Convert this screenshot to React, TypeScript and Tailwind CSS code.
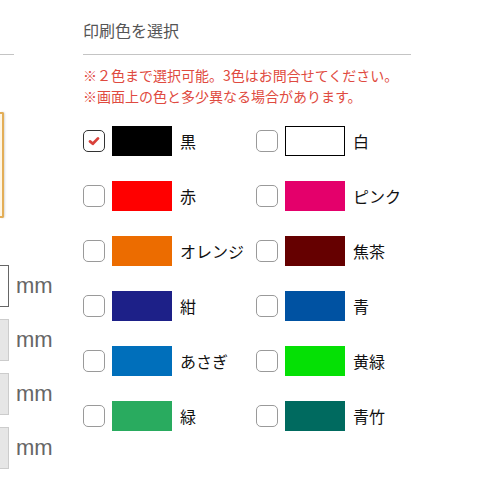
const colors = [
  { name: "黒", hex: "#000000", checked: true },
  { name: "白", hex: "#ffffff", border: true },
  { name: "赤", hex: "#ff0000" },
  { name: "ピンク", hex: "#e4006b" },
  { name: "オレンジ", hex: "#ec6c00" },
  { name: "焦茶", hex: "#650000" },
  { name: "紺", hex: "#1d2088" },
  { name: "青", hex: "#0052a2" },
  { name: "あさぎ", hex: "#006fbb" },
  { name: "黄緑", hex: "#05e005" },
  { name: "緑", hex: "#29ab5f" },
  { name: "青竹", hex: "#006a5f" },
];

function CheckBox({ checked }: { checked?: boolean }) {
  return (
    <span
      className={`flex h-[22px] w-[22px] shrink-0 items-center justify-center rounded-[5px] border bg-white ${
        checked ? "border-[#333]" : "border-[#9a9a9a]"
      }`}
    >
      {checked ? (
        <svg width="12" height="10" viewBox="0 0 12 10" aria-hidden>
          <path
            d="M2 5.4 L4.8 7.8 L10 2.4"
            fill="none"
            stroke="#d9413a"
            strokeWidth="2.8"
            strokeLinecap="round"
            strokeLinejoin="round"
          />
        </svg>
      ) : null}
    </span>
  );
}

function SizeRow({ active }: { active?: boolean }) {
  return (
    <div className="flex h-[42px] items-center">
      <div
        className={`h-full w-[9px] shrink-0 border border-l-0 ${
          active ? "border-[#666] bg-white" : "border-[#ccc] bg-[#e6e6e6]"
        }`}
      />
      <span className="ml-[7px] font-['Liberation_Sans',sans-serif] text-[22px] leading-none text-[#666]">
        mm
      </span>
    </div>
  );
}

export default function App() {
  return (
    <div className="flex h-[478px] w-[490px] overflow-hidden bg-white font-['Noto_Sans_CJK_JP',sans-serif]">
      <div className="flex w-[53px] shrink-0 flex-col">
        <div className="mt-[54px] h-px w-[14px] bg-[#c4c4c4]" />
        <div className="mt-[57px] h-[106px] w-[4px] rounded-r-[2px] border-2 border-l-0 border-[#e3ae57] bg-[#fff6e4] shadow-[1px_0_2px_rgba(0,0,0,0.15)]" />
        <div className="mt-[47px] flex flex-col gap-y-[12px]">
          <SizeRow active />
          <SizeRow />
          <SizeRow />
          <SizeRow />
        </div>
      </div>

      <div className="ml-[30px] w-[328px]">
        <div className="border-b border-[#c4c4c4] pb-[12px] pt-[18px] text-[16px] leading-[24px] text-[#555]">
          印刷色を選択
        </div>
        <div className="mt-[10px] text-[14px] leading-[21px] text-[#df4a40]">
          <p>※２色まで選択可能。3色はお問合せてください。</p>
          <p>※画面上の色と多少異なる場合があります。</p>
        </div>
        <div className="mt-[19px] grid grid-cols-[173px_173px] gap-y-[25px]">
          {colors.map((c) => (
            <label key={c.name} className="flex h-[30px] items-center">
              <CheckBox checked={c.checked} />
              <span
                className={`ml-[7px] h-[30px] w-[60px] shrink-0 ${
                  c.border ? "border border-black" : ""
                }`}
                style={{ backgroundColor: c.hex }}
              />
              <span className="ml-[8px] whitespace-nowrap text-[16px] leading-[30px] text-[#111]">
                {c.name}
              </span>
            </label>
          ))}
        </div>
      </div>
    </div>
  );
}
